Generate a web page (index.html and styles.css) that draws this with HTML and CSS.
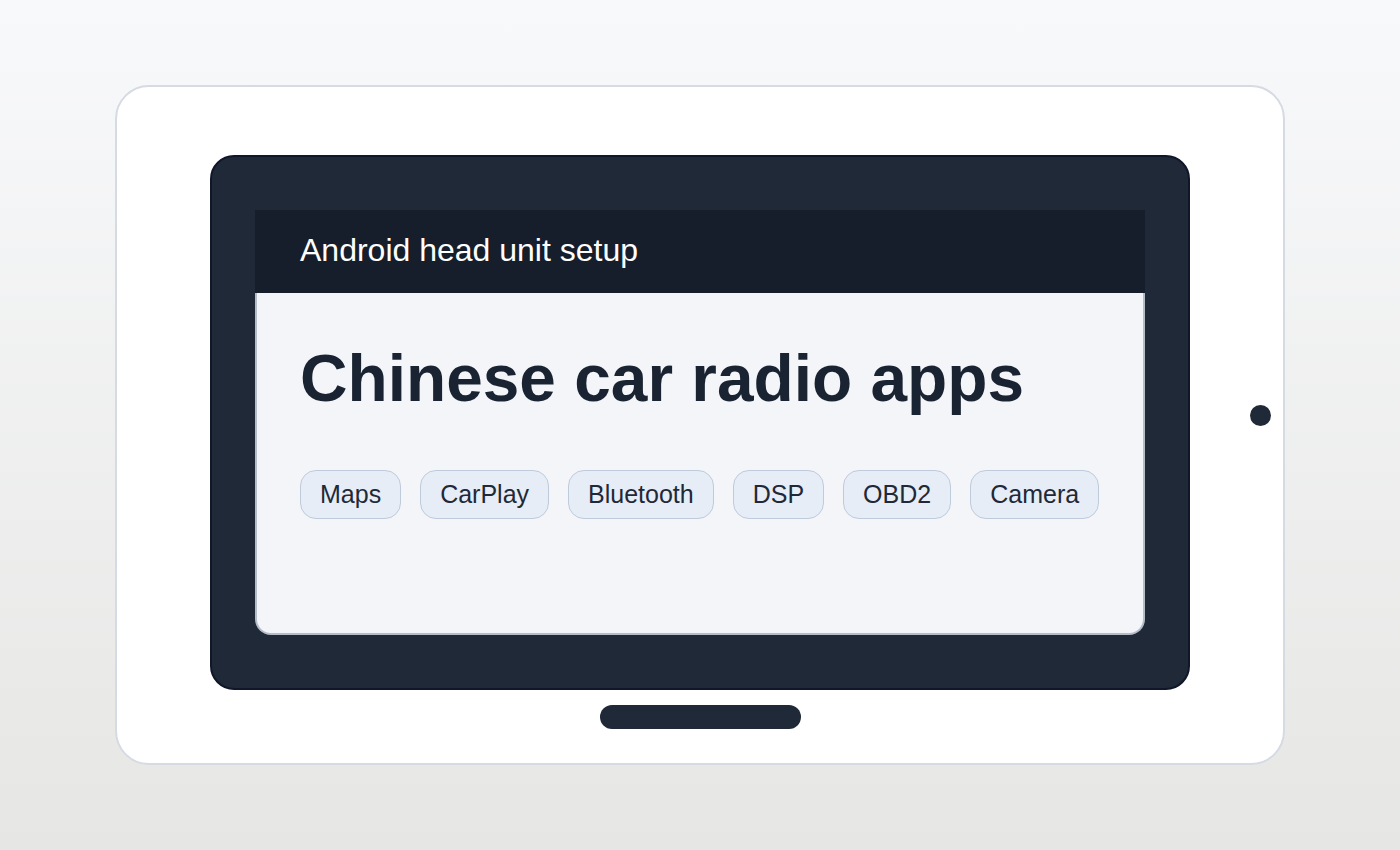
FILE: index.html
```html
<!DOCTYPE html>
<html>
<head>
	<meta charset="UTF-8">
	<title>Android head unit setup</title>
	<link rel="stylesheet" href="styles.css">
</head>
<body>
	<section class="tablet">
		<div class="bezel">
			<div class="screen">
				<div class="screen_header">Android head unit setup</div>
				<div class="screen_body">
					<h1 class="screen_title">Chinese car radio apps</h1>
					<ul class="tags">
						<li class="tag">Maps</li>
						<li class="tag">CarPlay</li>
						<li class="tag">Bluetooth</li>
						<li class="tag">DSP</li>
						<li class="tag">OBD2</li>
						<li class="tag">Camera</li>
					</ul>
				</div>
			</div>
		</div>
		<div class="home_bar"></div>
		<span class="camera_dot"></span>
	</section>
</body>
</html>
```

FILE: styles.css
```css
html, body {
	margin: 0;
	min-height: 850px;
}
body {
	background: linear-gradient(#f8f9fb, #e6e6e4);
	font-family: "Liberation Sans", Arial, sans-serif;
	padding-top: 85px;
	box-sizing: border-box;
}
.tablet {
	position: relative;
	width: 1170px;
	height: 680px;
	margin: 0 auto;
	padding-top: 68px;
	background: #fff;
	border: 2px solid #d5dae3;
	border-radius: 34px;
	box-sizing: border-box;
	display: flex;
	flex-direction: column;
	align-items: center;
}
.bezel {
	width: 980px;
	height: 535px;
	padding: 53px 43px;
	background: #1f2937;
	border: 2px solid #0f1729;
	border-radius: 24px;
	box-sizing: border-box;
}
.screen {
	height: 425px;
	display: flex;
	flex-direction: column;
}
.screen_header {
	height: 83px;
	line-height: 81px;
	padding: 0 0 2px 45px;
	background: #161e2b;
	color: #fff;
	font-size: 32px;
	box-sizing: border-box;
}
.screen_body {
	flex: 1;
	padding: 48px 43px 0;
	background: #f3f5f9;
	border: 2px solid #b4bcc8;
	border-top: none;
	border-radius: 0 0 16px 16px;
}
.screen_title {
	margin: 0;
	font-size: 65.8px;
	line-height: 1.15;
	font-weight: bold;
	color: #1a2332;
}
.tags {
	list-style: none;
	margin: 53px 0 0;
	padding: 0;
	display: flex;
	gap: 19px;
}
.tag {
	padding: 10px 19px;
	line-height: 27px;
	font-size: 25px;
	color: #1f2937;
	background: #e6edf7;
	border: 1px solid #bfcadb;
	border-radius: 16px;
}
.home_bar {
	width: 201px;
	height: 24px;
	margin-top: 15px;
	background: #1f2937;
	border-radius: 12px;
}
.camera_dot {
	position: absolute;
	left: 1133px;
	top: 318px;
	width: 21px;
	height: 21px;
	border-radius: 50%;
	background: #1f2937;
}
```
